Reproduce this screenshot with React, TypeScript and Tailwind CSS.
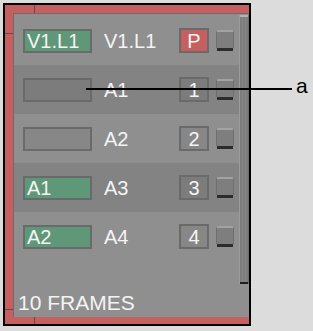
import React from 'react';

type Row = {
  box: string;
  green?: boolean;
  label: string;
  num: string;
  red?: boolean;
  dark?: boolean;
};

const rows: Row[] = [
  { box: 'V1.L1', green: true, label: 'V1.L1', num: 'P', red: true },
  { box: '', label: 'A1', num: '1', dark: true },
  { box: '', label: 'A2', num: '2' },
  { box: 'A1', green: true, label: 'A3', num: '3', dark: true },
  { box: 'A2', green: true, label: 'A4', num: '4' },
];

function Toggle() {
  return (
    <div className="flex h-[21px] w-[18px] flex-col">
      <div className="h-[18px] rounded-t-[3px] border-x border-t-2 border-x-[#6e6e6e] border-t-[#a3a3a3] bg-[#7e7e7e]" />
      <div className="mx-[1px] h-[3px] bg-[#2c2c2c]" />
    </div>
  );
}

function LayerRow({ row }: { row: Row }) {
  return (
    <div className={`flex h-[49px] items-center ${row.dark ? 'bg-[#838383]' : 'bg-[#8f8f8f]'}`}>
      <div
        className={`ml-[9px] flex h-[24px] w-[69px] items-center border-2 border-[#6a6a6a] pl-[2px] leading-none ${
          row.green ? 'bg-[#5f9878]' : 'bg-black/5'
        }`}
      >
        {row.box}
      </div>
      <div className="ml-[12px] flex-1 leading-none">{row.label}</div>
      <div
        className={`flex h-[25px] w-[30px] items-center justify-center border-2 border-[#6a6a6a] leading-none ${
          row.red ? 'bg-[#c65f5f]' : 'bg-black/5'
        }`}
      >
        {row.num}
      </div>
      <div className="ml-[7px] mr-[5px]">
        <Toggle />
      </div>
    </div>
  );
}

export default function App() {
  return (
    <div
      className="relative h-[331px] w-[313px] overflow-hidden bg-[#dcdcdc] pl-[3px] pt-[3px] text-[20px] text-[#f4f4f4]"
      style={{ fontFamily: '"Liberation Sans", Arial, sans-serif' }}
    >
      <div className="flex h-[323px] w-[248px] flex-col border-2 border-black bg-[#c65f5f]">
        {/* top strip */}
        <div className="flex h-[8px] shrink-0">
          <div className="w-[30px] border-r border-[#6b4848]" />
        </div>

        <div className="flex min-h-0 flex-1">
          {/* left strip */}
          <div className="flex w-[8px] shrink-0 flex-col">
            <div className="h-[21px] border-b border-[#6b4848]" />
            <div className="flex-1" />
            <div className="h-[8px] border-t border-[#6b4848]" />
          </div>

          {/* grey body */}
          <div className="flex flex-1 border-l border-t border-[#6c6c6c] bg-[#8f8f8f]">
            <div className="flex flex-1 flex-col pt-[2px]">
              {rows.map((r, i) => (
                <LayerRow key={i} row={r} />
              ))}
              <div className="mt-auto pb-[3px] pl-[4px] text-[21px] leading-[23px]">10 FRAMES</div>
            </div>

            {/* scrollbar */}
            <div className="mt-[1px] flex h-[269px] w-[10px] flex-col border-l border-r border-l-[#9c9c9c] border-r-[#6e6e6e] bg-[#7d7d7d]">
              <div className="h-[2px] bg-[#b4b4b4]" />
              <div className="mx-[2px] flex-1 border-x border-[#878787]" />
              <div className="h-[2px] bg-[#1e1e1e]" />
            </div>
          </div>
        </div>

        {/* bottom strip */}
        <div className="flex h-[7px] shrink-0">
          <div className="w-[30px] border-r border-[#6b4848]" />
        </div>
      </div>

      {/* callout */}
      <div className="absolute left-[86px] top-[88px] h-[2px] w-[206px] bg-black" />
      <div className="absolute left-[296px] top-[74px] text-[21px] leading-[24px] text-black">a</div>
    </div>
  );
}
